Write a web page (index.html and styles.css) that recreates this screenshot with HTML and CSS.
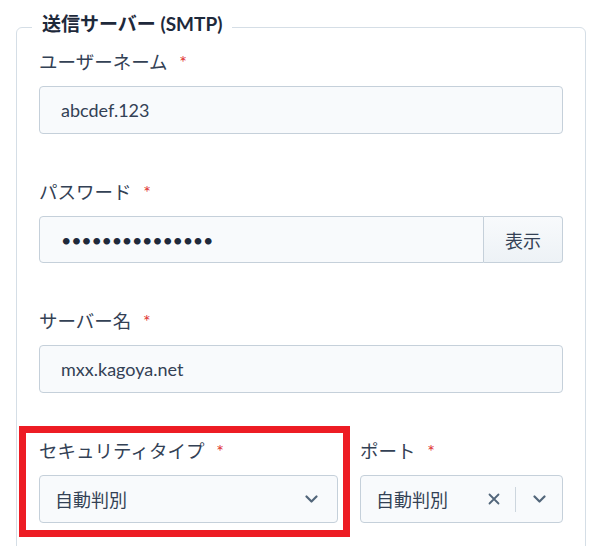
FILE: index.html
```html
<!DOCTYPE html>
<html lang="ja">
<head>
<meta charset="UTF-8" />
<meta name="viewport" content="width=device-width, initial-scale=1.0">
<title>送信サーバー設定</title>
<link rel="stylesheet" href="styles.css">
</head>
<body>

<fieldset class="server">
  <legend>送信サーバー (SMTP)</legend>

  <div class="field">
    <label for="user">ユーザーネーム <span class="req">*</span></label>
    <input type="text" id="user" class="control" value="abcdef.123">
  </div>

  <div class="field">
    <label for="pass">パスワード <span class="req">*</span></label>
    <div class="input-group">
      <input type="password" id="pass" class="control" value="abcdefghijklmno">
      <button type="button" class="show-btn">表示</button>
    </div>
  </div>

  <div class="field">
    <label for="host">サーバー名 <span class="req">*</span></label>
    <input type="text" id="host" class="control" value="mxx.kagoya.net">
  </div>

  <div class="row">
    <div class="field highlight">
      <label>セキュリティタイプ <span class="req">*</span></label>
      <div class="control select">
        <span class="select-value">自動判別</span>
        <span class="select-icons">
          <svg class="chev" viewBox="0 0 13 8" width="13" height="8"><path d="M1.5 1.5 6.5 6.5l5-5" /></svg>
        </span>
      </div>
    </div>
    <div class="field">
      <label>ポート <span class="req">*</span></label>
      <div class="control select port">
        <span class="select-value">自動判別</span>
        <span class="select-icons">
          <svg class="clear" viewBox="0 0 12 12" width="12" height="12"><path d="M1.5 1.5l9 9M10.5 1.5l-9 9" /></svg>
          <span class="sep"></span>
          <svg class="chev" viewBox="0 0 13 8" width="13" height="8"><path d="M1.5 1.5 6.5 6.5l5-5" /></svg>
        </span>
      </div>
    </div>
  </div>
</fieldset>

</body>
</html>
```

FILE: styles.css
```css
body {
  margin: 0;
  background: #fff;
  color: #334155;
  font-family: Lato, "Noto Sans CJK JP", sans-serif;
  font-size: 18px;
}
.server {
  margin: 12px 15px 0 16px;
  padding: 8px 22px 40px;
  border: 1px solid #d5dee6;
  border-radius: 6px;
  display: flex;
  flex-direction: column;
  gap: 46px;
}
.server legend {
  font-size: 19px;
  font-weight: bold;
  line-height: 24px;
  color: #1e293b;
  padding: 0 10px 6px;
  margin-left: -7px;
}
.field {
  display: flex;
  flex-direction: column;
  gap: 12px;
  position: relative;
}
.field label {
  font-size: 18.5px;
  line-height: 24px;
  color: #334155;
}
.req {
  color: #e03131;
  font-size: 18px;
  margin-left: 7px;
}
.control {
  box-sizing: border-box;
  height: 48px;
  width: 100%;
  border: 1px solid #c5d0da;
  border-radius: 4px;
  background: #f8fafc;
  padding: 0 21px;
  font-family: inherit;
  font-size: 18px;
  color: #334155;
  outline: none;
}
input[type=password].control {
  color: #1e293b;
  letter-spacing: -0.3px;
}
.input-group {
  display: flex;
}
.input-group .control {
  flex: 1;
  border-radius: 4px 0 0 4px;
  height: 47px;
}
.show-btn {
  width: 79px;
  height: 47px;
  border: 1px solid #c5d0da;
  border-left: none;
  border-radius: 0 4px 4px 0;
  background: linear-gradient(#f8fafc, #edf2f6);
  font-family: inherit;
  font-size: 18px;
  color: #334155;
  cursor: pointer;
}
.row {
  display: grid;
  grid-template-columns: minmax(0, 1fr) 203px;
  gap: 22px;
}
.select {
  display: flex;
  align-items: center;
  justify-content: space-between;
  padding: 0 19px 0 15px;
}
.select.port {
  padding-right: 16px;
}
.select-icons {
  display: flex;
  align-items: center;
  gap: 15px;
}
.select svg path {
  fill: none;
  stroke: #52667a;
  stroke-width: 2.2;
  stroke-linecap: round;
  stroke-linejoin: round;
}
.select .clear path {
  stroke-width: 1.8;
}
.sep {
  width: 1px;
  height: 25px;
  background: #cdd6de;
  margin-right: 2px;
}
.highlight::after {
  content: "";
  position: absolute;
  top: -13px;
  left: -20px;
  right: -12px;
  bottom: -14px;
  border: 7px solid #ed1c24;
  pointer-events: none;
}
```
